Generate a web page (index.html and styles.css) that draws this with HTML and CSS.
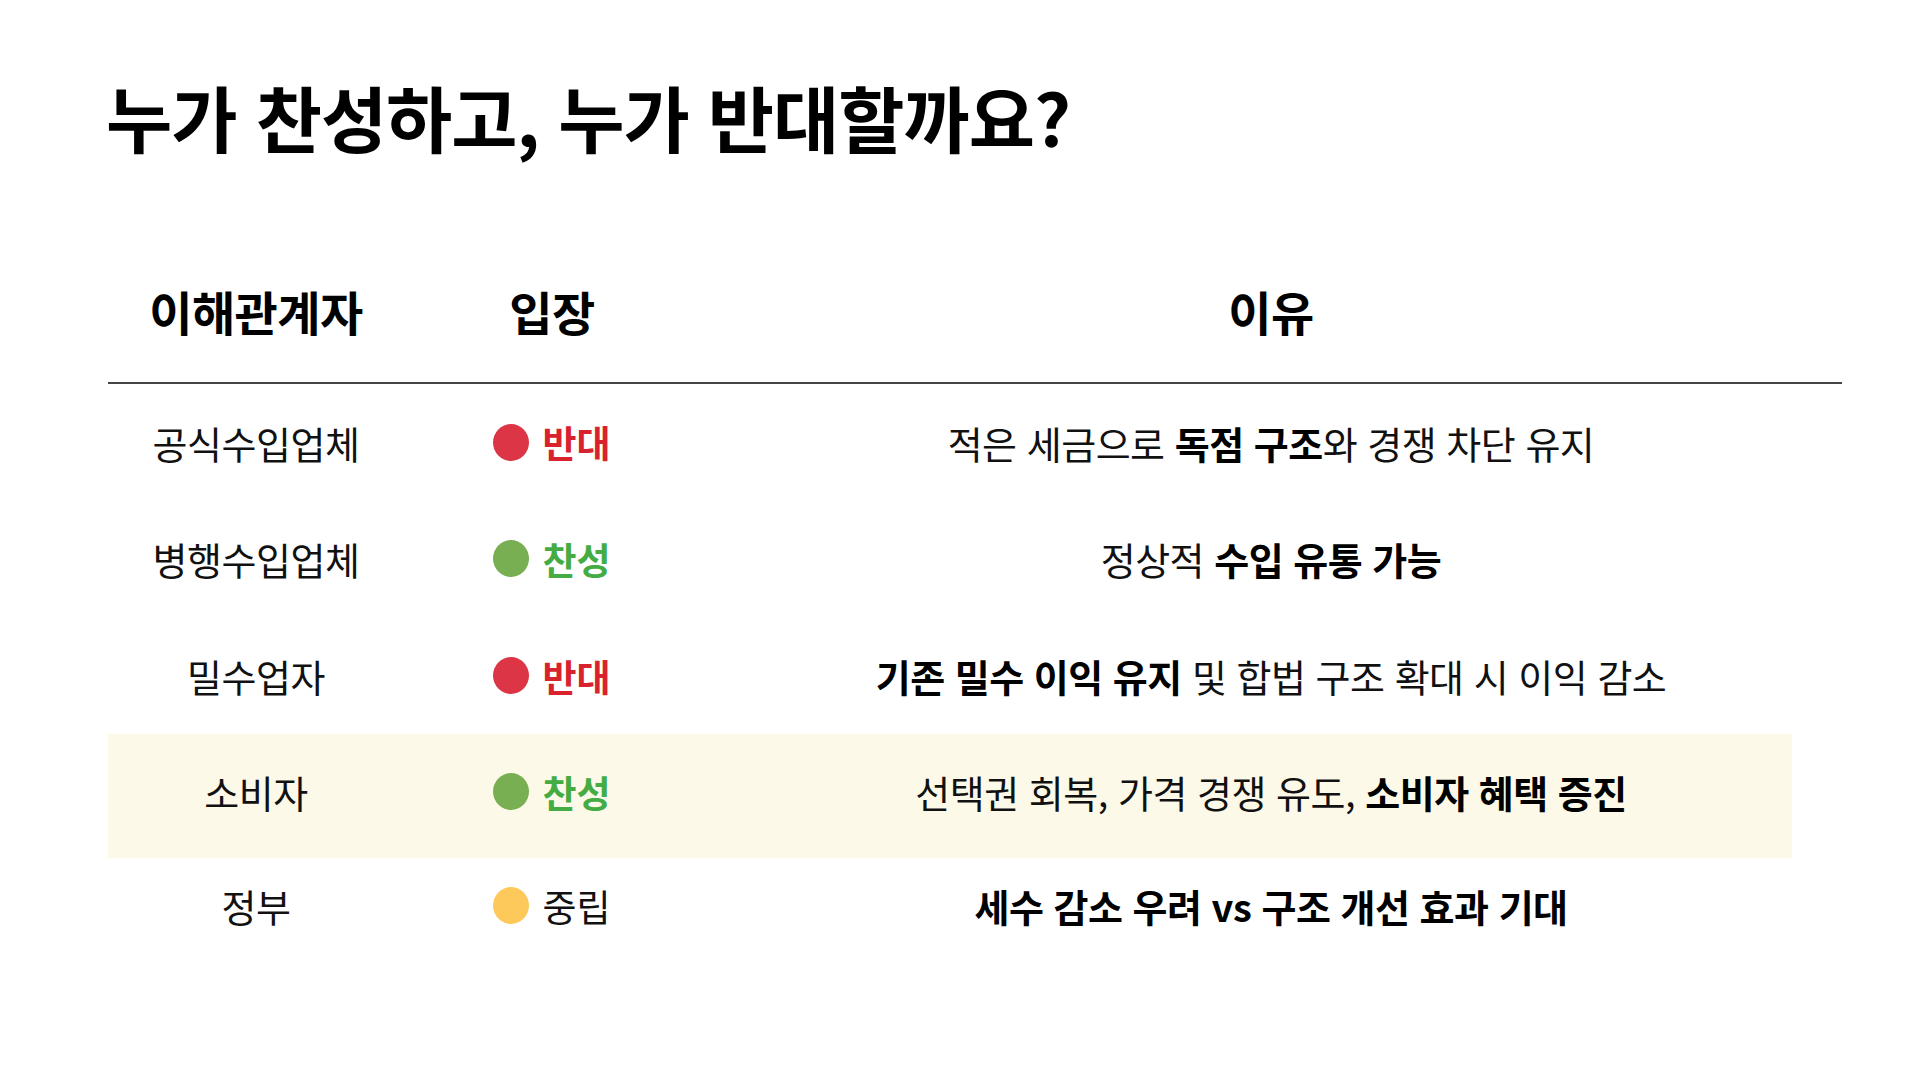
FILE: index.html
```html
<!DOCTYPE html>
<html lang="ko">
<head>
    <meta charset="UTF-8">
    <meta name="viewport" content="width=device-width, initial-scale=1.0">
    <title>누가 찬성하고, 누가 반대할까요?</title>
    <link rel="stylesheet" href="styles.css">
</head>
<body>

    <div class="slide">
        <h1>누가 찬성하고, 누가 반대할까요?</h1>

        <div class="table">
            <!-- Header -->
            <div class="row head">
                <div class="cell">이해관계자</div>
                <div class="cell">입장</div>
                <div class="cell">이유</div>
            </div>

            <div class="row">
                <div class="cell">공식수입업체</div>
                <div class="cell stance against"><span class="dot"></span>반대</div>
                <div class="cell reason">적은 세금으로 <b>독점 구조</b>와 경쟁 차단 유지</div>
            </div>

            <div class="row">
                <div class="cell">병행수입업체</div>
                <div class="cell stance for"><span class="dot"></span>찬성</div>
                <div class="cell reason">정상적 <b>수입 유통 가능</b></div>
            </div>

            <div class="row">
                <div class="cell">밀수업자</div>
                <div class="cell stance against"><span class="dot"></span>반대</div>
                <div class="cell reason"><b>기존 밀수 이익 유지</b> 및 합법 구조 확대 시 이익 감소</div>
            </div>

            <div class="row highlight">
                <div class="cell">소비자</div>
                <div class="cell stance for"><span class="dot"></span>찬성</div>
                <div class="cell reason">선택권 회복, 가격 경쟁 유도, <b>소비자 혜택 증진</b></div>
            </div>

            <div class="row last">
                <div class="cell">정부</div>
                <div class="cell stance neutral"><span class="dot"></span>중립</div>
                <div class="cell reason"><b>세수 감소 우려 vs 구조 개선 효과 기대</b></div>
            </div>
        </div>
    </div>

</body>
</html>
```

FILE: styles.css
```css
body {
    margin: 0;
    background-color: #fff;
    font-family: "Noto Sans CJK KR", "Noto Sans", sans-serif;
    color: #111;
}

.slide {
    padding: 0 78px 0 108px;
}

h1 {
    margin: 73px 0 0 -2px;
    font-size: 72px;
    line-height: 86px;
    font-weight: 700;
    letter-spacing: -1px;
    color: #000;
}

.table {
    margin-top: 85px;
}

.row {
    display: grid;
    grid-template-columns: 296px 296px 1fr;
    box-sizing: border-box;
    height: 116.67px;
    align-items: center;
    font-size: 38px;
    letter-spacing: -0.5px;
}

.cell {
    text-align: center;
    white-space: nowrap;
}

/* Header row with the dark rule under it */
.row.head {
    height: 140px;
    padding-bottom: 6px;
    border-bottom: 2px solid #444;
    font-size: 47px;
    font-weight: 700;
    letter-spacing: -0.5px;
    color: #000;
}

.row.highlight {
    height: 124px;
    padding-bottom: 8px;
    background: linear-gradient(#fdf9e8, #fdf9e8) left top / calc(100% - 50px) 100% no-repeat;
}

.row.last {
    height: 96px;
}

.reason b {
    font-weight: 700;
    color: #000;
}

/* Stance column */
.stance {
    display: flex;
    justify-content: center;
    align-items: center;
    gap: 13px;
    font-size: 37px;
    font-weight: 700;
    letter-spacing: 0;
}

.dot {
    width: 36px;
    height: 37px;
    border-radius: 50%;
}

.against {
    color: #d8232e;
}

.against .dot {
    background-color: #dc3545;
}

.for {
    color: #45ac44;
}

.for .dot {
    background-color: #78af52;
}

.neutral {
    font-weight: 400;
    color: #111;
}

.neutral .dot {
    background-color: #fdc95a;
}
```
